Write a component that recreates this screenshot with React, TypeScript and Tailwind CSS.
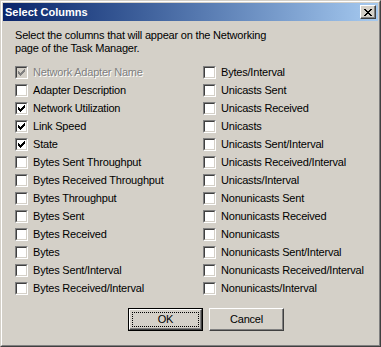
import React from "react";

const left = [
  { label: "Network Adapter Name", checked: true, disabled: true },
  { label: "Adapter Description" },
  { label: "Network Utilization", checked: true },
  { label: "Link Speed", checked: true },
  { label: "State", checked: true },
  { label: "Bytes Sent Throughput" },
  { label: "Bytes Received Throughput" },
  { label: "Bytes Throughput" },
  { label: "Bytes Sent" },
  { label: "Bytes Received" },
  { label: "Bytes" },
  { label: "Bytes Sent/Interval" },
  { label: "Bytes Received/Interval" },
];

const right = [
  { label: "Bytes/Interval" },
  { label: "Unicasts Sent" },
  { label: "Unicasts Received" },
  { label: "Unicasts" },
  { label: "Unicasts Sent/Interval" },
  { label: "Unicasts Received/Interval" },
  { label: "Unicasts/Interval" },
  { label: "Nonunicasts Sent" },
  { label: "Nonunicasts Received" },
  { label: "Nonunicasts" },
  { label: "Nonunicasts Sent/Interval" },
  { label: "Nonunicasts Received/Interval" },
  { label: "Nonunicasts/Interval" },
];

type Item = { label: string; checked?: boolean; disabled?: boolean };

function Check({ color }: { color: string }) {
  const px: [number, number][] = [
    [6, 0],
    [5, 1], [6, 1],
    [0, 2], [4, 2], [5, 2], [6, 2],
    [0, 3], [1, 3], [3, 3], [4, 3], [5, 3],
    [0, 4], [1, 4], [2, 4], [3, 4], [4, 4],
    [1, 5], [2, 5], [3, 5],
    [2, 6],
  ];
  return (
    <svg width="7" height="7" viewBox="0 0 7 7" shapeRendering="crispEdges" className="block">
      {px.map(([x, y], i) => (
        <rect key={i} x={x} y={y} width="1" height="1" fill={color} />
      ))}
    </svg>
  );
}

function CheckBox({ item }: { item: Item }) {
  return (
    <div className="flex h-[18px] items-center">
      <div className="h-[13px] w-[13px] shrink-0 border border-t-[#808080] border-l-[#808080] border-r-white border-b-white">
        <div
          className={
            "flex h-[11px] w-[11px] items-center justify-center border border-t-[#404040] border-l-[#404040] border-r-[#d4d0c8] border-b-[#d4d0c8] " +
            (item.disabled ? "bg-[#d4d0c8]" : "bg-white")
          }
        >
          {item.checked && <Check color={item.disabled ? "#808080" : "#000000"} />}
        </div>
      </div>
      <span
        className={
          "ml-[5px] whitespace-nowrap leading-[13px] " +
          (item.disabled ? "text-[#808080] [text-shadow:1px_1px_0_#ffffff]" : "text-black")
        }
      >
        {item.label}
      </span>
    </div>
  );
}

function CloseX() {
  const px: [number, number][] = [
    [0, 0], [1, 0], [6, 0], [7, 0],
    [1, 1], [2, 1], [5, 1], [6, 1],
    [2, 2], [3, 2], [4, 2], [5, 2],
    [3, 3], [4, 3],
    [2, 4], [3, 4], [4, 4], [5, 4],
    [1, 5], [2, 5], [5, 5], [6, 5],
    [0, 6], [1, 6], [6, 6], [7, 6],
  ];
  return (
    <svg width="8" height="7" viewBox="0 0 8 7" shapeRendering="crispEdges" className="block">
      {px.map(([x, y], i) => (
        <rect key={i} x={x} y={y} width="1" height="1" fill="#000" />
      ))}
    </svg>
  );
}

export default function App() {
  return (
    <div
      className="h-[347px] w-[381px] border border-t-[#d4d0c8] border-l-[#d4d0c8] border-r-[#404040] border-b-[#404040] text-[11px]"
      style={{ fontFamily: '"Liberation Sans", Arial, sans-serif' }}
    >
      <div className="h-full w-full border border-t-white border-l-white border-r-[#808080] border-b-[#808080] bg-[#d4d0c8] p-px">
        <div className="flex h-[18px] items-center justify-between bg-gradient-to-r from-[#0a246a] to-[#a6caf0] pl-[2px] pr-[2px]">
          <span className="font-bold leading-[13px] text-white">Select Columns</span>
          <div className="flex h-[14px] w-[16px] items-center justify-center border border-t-white border-l-white border-r-[#404040] border-b-[#404040] bg-[#d4d0c8] shadow-[inset_-1px_-1px_0_#808080]">
            <CloseX />
          </div>
        </div>
        <div className="tracking-[-0.2px]">
          <div className="pl-[12px] pt-[8px] leading-[13px] text-black">
            <div>Select the columns that will appear on the Networking</div>
            <div>page of the Task Manager.</div>
          </div>
          <div className="mt-[8px] grid grid-cols-[188px_1fr] pl-[12px]">
            <div className="flex flex-col">
              {left.map((it) => (
                <CheckBox key={it.label} item={it} />
              ))}
            </div>
            <div className="flex flex-col">
              {right.map((it) => (
                <CheckBox key={it.label} item={it} />
              ))}
            </div>
          </div>
          <div className="mt-[11px] flex gap-[6px] pl-[125px]">
            <div className="h-[23px] w-[75px] border border-black">
              <div className="h-full w-full border border-t-white border-l-white border-r-[#404040] border-b-[#404040] p-[2px] shadow-[inset_-1px_-1px_0_#808080]">
                <div className="flex h-full w-full items-center justify-center border border-dotted border-black text-black">
                  OK
                </div>
              </div>
            </div>
            <div className="flex h-[23px] w-[75px] items-center justify-center border border-t-white border-l-white border-r-[#404040] border-b-[#404040] text-black shadow-[inset_-1px_-1px_0_#808080]">
              Cancel
            </div>
          </div>
        </div>
      </div>
    </div>
  );
}
